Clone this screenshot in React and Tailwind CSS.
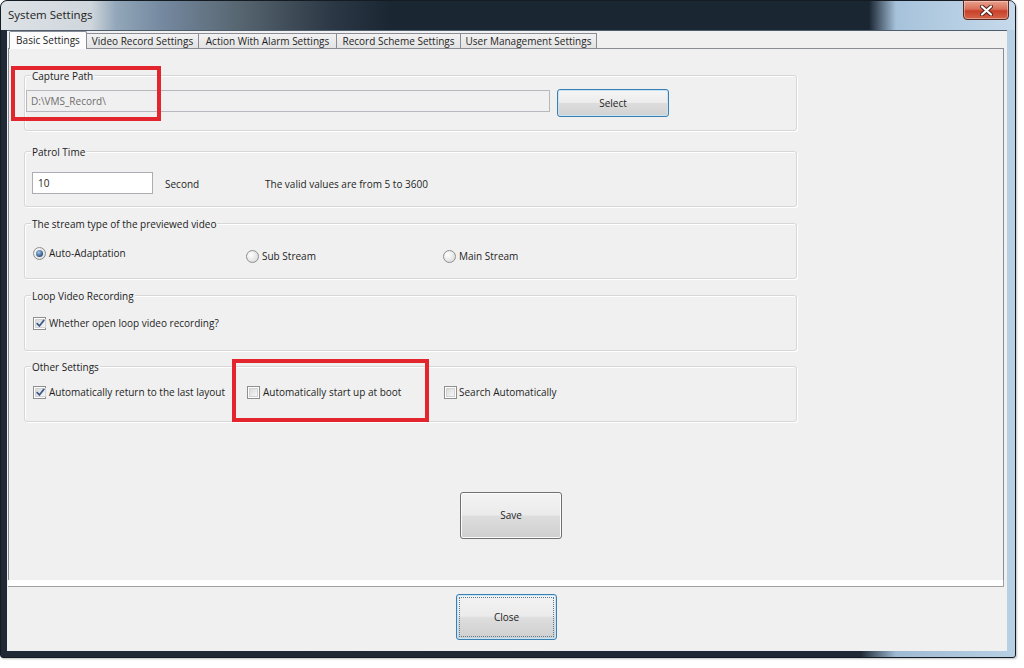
import React from "react";

function Check({ checked }) {
  return (
    <span className="w-[13px] h-[13px] border border-[#8e8f8f] bg-white p-[1px] flex shrink-0">
      <span className="flex-1 flex items-center justify-center border border-[#d2d2d2] bg-[linear-gradient(135deg,#dadada,#f7f7f7)]">
        {checked && (
          <svg width="9" height="9" viewBox="0 0 9 9">
            <path d="M1.2 4.6 L3.4 7 L7.8 1.4" fill="none" stroke="#3e5a8a" strokeWidth="1.7" strokeLinecap="round" strokeLinejoin="round" />
          </svg>
        )}
      </span>
    </span>
  );
}

function Radio({ checked }) {
  return (
    <span className="w-[13px] h-[13px] rounded-full border border-[#8e8f8f] bg-[radial-gradient(circle_at_35%_35%,#ffffff,#d4d4d4)] flex items-center justify-center shrink-0">
      {checked && <span className="w-[7px] h-[7px] rounded-full bg-[radial-gradient(circle_at_40%_35%,#a9c9ea,#2a5283_70%,#1d3d66)]" />}
    </span>
  );
}

function Group({ title, className = "", children }) {
  return (
    <div className={`relative h-[56px] w-[773px] rounded-[3px] border border-[#d7d7d7] shadow-[inset_1px_1px_0_#ffffff,1px_1px_0_#ffffff] ${className}`}>
      <span className="absolute left-[6px] -top-[8px] px-[1px] bg-[#f0f0f0] text-[#222] leading-[16px]">{title}</span>
      {children}
    </div>
  );
}

const tabs = [
  { t: "Video Record Settings", w: "w-[113px]" },
  { t: "Action With Alarm Settings", w: "w-[139px]" },
  { t: "Record Scheme Settings", w: "w-[125px]" },
  { t: "User Management Settings", w: "w-[137px]" },
];

export default function App() {
  return (
    <div className="relative w-[1024px] h-[668px] bg-white overflow-hidden font-['Open_Sans',sans-serif] text-[10px] text-[#1e1e1e]">
      <div className="relative w-[1016px] h-[658px] rounded-t-[7px] rounded-b-[3px] border border-[#151b22] bg-[linear-gradient(90deg,#1f2a36_0px,#1e2935_860px,#9ebad3_895px,#b8d0e4_100%)] flex flex-col shadow-[1px_1px_2px_rgba(0,0,0,0.25)]">
        {/* title bar */}
        <div className="h-[29px] shrink-0 rounded-t-[6px] bg-[linear-gradient(90deg,#dde2e6_0px,#cfd6dc_90px,#93a7ba_115px,#7589a0_160px,#56656f_240px,#2c3845_330px,#1b2633_390px,#1b2633_868px,#a6c2db_895px,#c6daeb_100%)] flex items-center pl-[7px] pb-[1px]">
          <span className="text-[11.5px] text-[#222]">System Settings</span>
        </div>
        <div className="absolute right-[6px] -top-px w-[46px] h-[20px] rounded-b-[4px] border border-[#5a2a20] bg-[linear-gradient(#eaa18d_0%,#d9705a_45%,#c8402a_55%,#d4664a_100%)] flex items-center justify-center shadow-[inset_0_0_0_1px_rgba(255,255,255,0.35)]">
          <svg width="13" height="11" viewBox="0 0 13 11">
            <path d="M2 1.5 L11 9.5 M11 1.5 L2 9.5" stroke="#4a1a12" strokeWidth="4" strokeLinecap="round" />
            <path d="M2 1.5 L11 9.5 M11 1.5 L2 9.5" stroke="#ffffff" strokeWidth="2.3" strokeLinecap="round" />
          </svg>
        </div>

        {/* client */}
        <div className="flex-1 ml-[6px] mr-[8px] mb-[6px] bg-[#f0f0f0] flex flex-col border-t border-[#4f5e6c]">
          {/* tabs */}
          <div className="flex items-end h-[18px] pl-[2px] -mb-px relative z-10">
            <div className="w-[78px] h-[18px] bg-[#fcfcfc] border border-b-0 border-[#898c95] rounded-t-[2px] flex items-center justify-center">
              Basic Settings
            </div>
            {tabs.map((x) => (
              <div
                key={x.t}
                className={`${x.w} h-[15px] mb-px -ml-px first:ml-0 bg-[linear-gradient(#f2f2f2,#e3e3e3)] border border-b-0 border-[#898c95] flex items-center justify-center whitespace-nowrap`}
              >
                {x.t}
              </div>
            ))}
          </div>

          {/* panel */}
          <div className="ml-px w-[996px] h-[532px] border-x border-t border-[#898c95] bg-[#f0f0f0] flex flex-col pl-[15px]">
            <Group title="Capture Path" className="mt-[26px]">
              <div className="flex items-start pt-[13px] pl-px">
                <div className="mt-px w-[524px] h-[22px] border border-[#b6b8bd] bg-[#f0f0f0] flex items-center pl-[4px] pt-px text-[#6d6d6d]">
                  {"D:\\VMS_Record\\"}
                </div>
                <button className="ml-[7px] w-[112px] h-[28px] rounded-[3px] border border-[#3c7fb1] bg-[linear-gradient(#f6f6f6_0%,#ececec_48%,#dcdcdc_52%,#d2d2d2_100%)] shadow-[inset_0_0_0_1px_#c6e6f7] text-[#1e1e1e] pt-px">
                  Select
                </button>
              </div>
            </Group>

            <Group title="Patrol Time" className="mt-[20px]">
              <div className="flex items-center pt-[20px] pl-[7px]">
                <div className="w-[121px] h-[22px] border border-[#abadb3] bg-white flex items-center pl-[5px]">10</div>
                <span className="ml-[12px] w-[100px] pt-[3px]">Second</span>
                <span className="pt-[3px]">The valid values are from 5 to 3600</span>
              </div>
            </Group>

            <Group title="The stream type of the previewed video" className="mt-[16px]">
              <div className="flex items-start pt-[23px] pl-[8px]">
                <div className="w-[213px] flex items-center gap-[3px]">
                  <Radio checked />
                  <span className="leading-[13px]">Auto-Adaptation</span>
                </div>
                <div className="w-[197px] flex items-center gap-[3px] mt-[3px]">
                  <Radio />
                  <span className="leading-[13px]">Sub Stream</span>
                </div>
                <div className="flex items-center gap-[3px] mt-[3px]">
                  <Radio />
                  <span className="leading-[13px]">Main Stream</span>
                </div>
              </div>
            </Group>

            <Group title="Loop Video Recording" className="mt-[16px]">
              <div className="flex items-center gap-[3px] pt-[21px] pl-[8px]">
                <Check checked />
                <span className="leading-[13px]">Whether open loop video recording?</span>
              </div>
            </Group>

            <Group title="Other Settings" className="mt-[15px]">
              <div className="flex items-center pt-[19px] pl-[8px]">
                <div className="w-[214px] flex items-center gap-[3px]">
                  <Check checked />
                  <span className="leading-[13px]">Automatically return to the last layout</span>
                </div>
                <div className="w-[197px] flex items-center gap-[3px]">
                  <Check />
                  <span className="leading-[13px]">Automatically start up at boot</span>
                </div>
                <div className="flex items-center gap-[2px]">
                  <Check />
                  <span className="leading-[13px]">Search Automatically</span>
                </div>
              </div>
            </Group>

            <button className="mt-[70px] ml-[436px] w-[102px] h-[47px] rounded-[3px] border border-[#707070] bg-[linear-gradient(#f3f3f3_0%,#ebebeb_48%,#dddddd_52%,#cfcfcf_100%)] shadow-[inset_0_0_0_1px_#fbfbfb] self-start text-[#1e1e1e]">
              Save
            </button>
          </div>
          <div className="ml-px w-[996px] h-[7px] bg-white border-b border-r border-[#a0a0a0]" />

          {/* bottom */}
          <div className="flex-1 pt-[7px] pl-[449px]">
            <button className="w-[101px] h-[46px] rounded-[3px] border border-[#3c7fb1] bg-[linear-gradient(#f3f3f3_0%,#ebebeb_48%,#dddddd_52%,#cfcfcf_100%)] shadow-[inset_0_0_0_1px_#c6e6f7] p-[2px] text-[#1e1e1e]">
              <span className="w-full h-full border border-dotted border-[#5a7a90] flex items-center justify-center">Close</span>
            </button>
          </div>
        </div>
      </div>

      {/* red annotation boxes */}
      <div className="absolute left-[11px] top-[66px] w-[150px] h-[55px] border-[4px] border-[#e3252d] pointer-events-none" />
      <div className="absolute left-[232px] top-[359px] w-[197px] h-[63px] border-[4px] border-[#e3252d] pointer-events-none" />
    </div>
  );
}
